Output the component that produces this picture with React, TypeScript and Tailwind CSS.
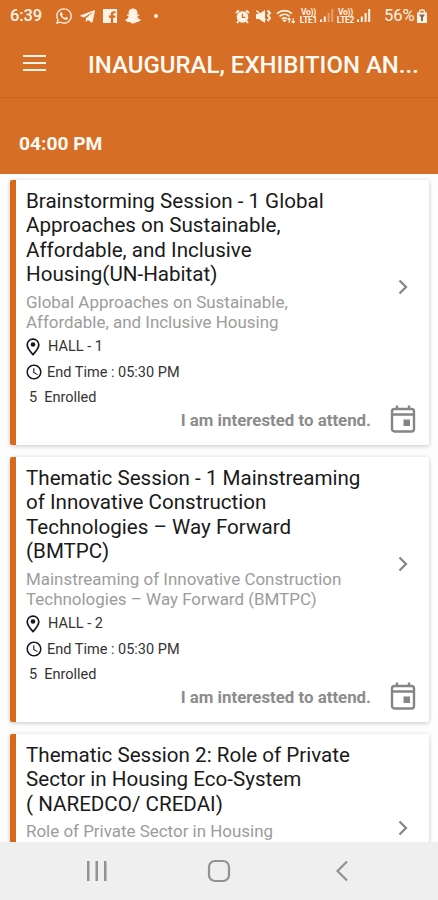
import { FaSnapchatGhost, FaTelegramPlane, FaWhatsapp } from "react-icons/fa";
import { MdAccessTime } from "react-icons/md";

type Session = {
  id: number;
  title: string[];
  summary: string[];
  details?: { hall: string; endTime: string; enrolled: number };
};

const sessions: Session[] = [
  {
    id: 1,
    title: [
      "Brainstorming Session - 1 Global",
      "Approaches on Sustainable,",
      "Affordable, and Inclusive",
      "Housing(UN-Habitat)",
    ],
    summary: [
      "Global Approaches on Sustainable,",
      "Affordable, and Inclusive Housing",
    ],
    details: { hall: "HALL - 1", endTime: "05:30 PM", enrolled: 5 },
  },
  {
    id: 2,
    title: [
      "Thematic Session - 1 Mainstreaming",
      "of Innovative Construction",
      "Technologies – Way Forward",
      "(BMTPC)",
    ],
    summary: [
      "Mainstreaming of Innovative Construction",
      "Technologies – Way Forward (BMTPC)",
    ],
    details: { hall: "HALL - 2", endTime: "05:30 PM", enrolled: 5 },
  },
  {
    id: 3,
    title: [
      "Thematic Session 2: Role of Private",
      "Sector in Housing Eco-System",
      "( NAREDCO/ CREDAI)",
    ],
    summary: ["Role of Private Sector in Housing"],
  },
];

function AlarmIcon() {
  return (
    <svg width="15" height="15" viewBox="0 0 15 15" fill="none">
      <circle cx="7.5" cy="8" r="5.8" fill="#fff3e6" />
      <path d="M1 4 4 1.4M14 4l-3-2.6M3.6 12 2 14M11.4 12l1.6 2" stroke="#fff3e6" strokeWidth="2" />
      <path d="M7.5 4.8v3.6h2.8" stroke="#d66e25" strokeWidth="1.3" />
    </svg>
  );
}

function MuteVibrateIcon() {
  return (
    <svg width="17" height="15" viewBox="0 0 17 15" fill="none">
      <path d="M1 5h3l6-4v13L4 10H1z" fill="#fff3e6" />
      <path d="m1.500 1.500 9 9.500" stroke="#fff3e6" strokeWidth="1.500" />
      <path d="m12.500 1.500 2.500 2.500-2 2.500 2 2.500-2.500 3" stroke="#fff3e6" strokeWidth="2" />
    </svg>
  );
}

function WifiIcon() {
  return (
    <svg width="20" height="15" viewBox="0 0 20 15" fill="none" stroke="#fff3e6">
      <path d="M1 4.600c4.500-4 10.500-4 15 0M3.500 7.400c3-2.700 7-2.700 10 0M6 10c1.700-1.400 3.300-1.400 5 0" strokeWidth="1.700" />
      <path d="m7 11.200 1.500 1.800 1.500-1.800z" fill="#fff3e6" />
      <path d="M13.200 9v5M11.600 10.800 13.200 9l1.500 1.800M17.200 14V9M15.600 12.200l1.600 1.800 1.600-1.800" strokeWidth="1.100" />
    </svg>
  );
}

function SignalIcon({ weak }: { weak?: boolean }) {
  return (
    <svg width="15" height="14" viewBox="0 0 15 14" fill="#fff3e6">
      <rect x="1" y="10.500" width="2" height="2.500" />
      <rect x="4.800" y="7.500" width="2" height="5.500" />
      <rect x="8.600" y="4" width="2" height="9" opacity={weak ? 0.4 : 1} />
      <rect x="12.200" y="0" width="2" height="13" opacity={weak ? 0.4 : 1} />
    </svg>
  );
}

function VolteLabel({ line }: { line: string }) {
  return (
    <div className="flex w-[19px] flex-col items-center text-[8.500px] leading-[8.500px] font-bold tracking-[-0.3px]">
      <span>Vo))</span>
      <span>{line}</span>
    </div>
  );
}

function StatusBar() {
  return (
    <div className="flex h-[32px] items-center pl-[10px] text-[#fff3e6]">
      <span className="w-[45px] text-[16.5px] font-medium tracking-[-0.1px]">6:39</span>
      <FaWhatsapp className="h-[18px] w-[18px]" />
      <FaTelegramPlane className="ml-[6px] h-[17px] w-[17px]" />
      <svg className="ml-[7px]" width="14" height="14" viewBox="0 0 14 14">
        <path fill="#fff3e6" d="M0 0h14v14h-3.800V8.800h2l.3-2.200h-2.300V5.300c0-.7.300-1.100 1.200-1.100h1.200V2.200h-1.800c-2 0-3 1.200-3 2.900v1.500H5.900v2.200h1.900V14H0z" />
      </svg>
      <FaSnapchatGhost className="ml-[8px] h-[16px] w-[16px]" />
      <span className="ml-[13px] h-1 w-1 rounded-full bg-[#fff3e6]" />
      <div className="ml-[77px] flex items-center">
        <AlarmIcon />
        <div className="ml-[5px]"><MuteVibrateIcon /></div>
        <div className="ml-[4px]"><WifiIcon /></div>
        <div className="ml-[3px]"><VolteLabel line="LTE1" /></div>
        <div className="ml-[1px]"><SignalIcon weak /></div>
        <div className="ml-[2px]"><VolteLabel line="LTE2" /></div>
        <div className="ml-[1px]"><SignalIcon /></div>
      </div>
      <span className="ml-[13px] w-[32px] text-[16.5px]">56%</span>
      <svg className="ml-[1px]" width="10" height="14" viewBox="0 0 10 14">
        <path d="M2.500 4V2.500C2.500.5 7.500.5 7.500 2.500V4" fill="none" stroke="#fff3e6" strokeWidth="1.300" />
        <path fill="#fff3e6" d="M0 3.500h10V14H0z" />
        <path fill="#8a6a55" d="M2 5.500h6L6 8.500V12H4V8.500z" />
      </svg>
    </div>
  );
}

function AppBar() {
  return (
    <div className="flex h-[65px] items-center pl-[23px]">
      <div className="flex w-[65px] flex-col gap-[5px] pb-[3px]">
        <span className="h-[2px] w-[23px] bg-[#fff3e6]" />
        <span className="h-[2px] w-[23px] bg-[#fff3e6]" />
        <span className="h-[2px] w-[23px] bg-[#fff3e6]" />
      </div>
      <h1 className="text-[24px] font-medium whitespace-nowrap text-[#fffaf4]">
        INAUGURAL, EXHIBITION AN...
      </h1>
    </div>
  );
}

function PinIcon() {
  return (
    <svg width="14" height="18" viewBox="0 0 14 18" fill="none">
      <path d="M7 1.100A5.700 5.700 0 0 0 1.200 6.800C1.200 10.500 7 16.600 7 16.600s5.800-6.100 5.800-9.800A5.700 5.700 0 0 0 7 1.100z" stroke="#171717" strokeWidth="1.700" />
      <circle cx="7" cy="6.500" r="2.300" fill="#171717" />
    </svg>
  );
}

function CalendarIcon() {
  return (
    <svg width="26" height="28" viewBox="0 0 26 28" fill="none" stroke="#858585">
      <rect x="2" y="4" width="22" height="22.500" rx="2.500" strokeWidth="2.400" />
      <path d="M2 9.500h22" strokeWidth="2.400" />
      <path d="M7 0.500V4M19 0.500V4" strokeWidth="2.400" />
      <rect x="13.500" y="14.500" width="6.500" height="6.500" fill="#858585" stroke="none" />
    </svg>
  );
}

function SessionCard({ session }: { session: Session }) {
  const { title, summary, details } = session;

  return (
    <article className="flex h-[265px] shrink-0 overflow-hidden rounded-[2px] bg-white shadow-[0_1px_4px_rgba(0,0,0,0.22)]">
      <div className="w-[6px] shrink-0 bg-[#d66a1a]" />
      <div className="grow pt-[9px] pl-[10px]">
        <div className="flex items-center justify-between">
          <div className={details ? "" : "min-h-[196px]"}>
            {/* Title */}
            <h2 className="text-[20.600px] leading-[24.400px] text-[#1a1a1a]">
              {title.map((line) => (
                <span key={line} className="block whitespace-nowrap">{line}</span>
              ))}
            </h2>
            <p className="mt-[5px] text-[16.950px] leading-[20px] text-[#9c9c9c]">
              {summary.map((line) => (
                <span key={line} className="block whitespace-nowrap">{line}</span>
              ))}
            </p>
            {/* Details */}
            {details && (
              <div className="mt-[3px] text-[14.500px] text-[#333333]">
                <div className="flex h-[25.200px] items-center gap-[8px]">
                  <PinIcon />
                  <span>{details.hall}</span>
                </div>
                <div className="flex h-[25.200px] items-center gap-[4px]">
                  <MdAccessTime className="-ml-px h-[18px] w-[18px] text-[#171717]" />
                  <span>End Time : {details.endTime}</span>
                </div>
                <div className="flex h-[25.200px] items-center gap-[7px] pl-[3px]">
                  <span>{details.enrolled}</span>
                  <span>Enrolled</span>
                </div>
              </div>
            )}
          </div>
          <svg className="mr-[20px] mb-[26px]" width="12" height="16" viewBox="0 0 12 16" fill="none">
            <path d="m2.500 1.500 6.500 6.500-6.500 6.500" stroke="#858585" strokeWidth="2.200" />
          </svg>
        </div>
        {details && (
          <div className="flex items-start justify-end pr-[13px]">
            <span className="text-[16.850px] leading-[20px] font-bold text-[#8c8c8c]">
              I am interested to attend.
            </span>
            <div className="-mt-[5px] ml-[19px]"><CalendarIcon /></div>
          </div>
        )}
      </div>
    </article>
  );
}

function NavigationBar() {
  return (
    <nav className="flex h-[58px] shrink-0 items-center bg-[#efefef] pl-[86px] text-[#929292]">
      <svg width="22" height="22" viewBox="0 0 22 22" fill="currentColor">
        <rect x="1" y="1" width="2.500" height="20" />
        <rect x="9.500" y="1" width="2.500" height="20" />
        <rect x="18" y="1" width="2.500" height="20" />
      </svg>
      <svg className="ml-[99px]" width="24" height="24" viewBox="0 0 24 24" fill="none">
        <rect x="2" y="2" width="20" height="20" rx="6" stroke="currentColor" strokeWidth="2.200" />
      </svg>
      <svg className="ml-[104px]" width="14" height="22" viewBox="0 0 14 22" fill="none">
        <path d="M12 1.500 2.500 11l9.500 9.500" stroke="currentColor" strokeWidth="2.200" />
      </svg>
    </nav>
  );
}

export default function App() {
  return (
    <div className="flex h-[900px] w-[438px] flex-col overflow-hidden bg-[#fdfdfd] font-[Roboto,sans-serif]">
      <header className="h-[174px] shrink-0 bg-[#d66e25]">
        <StatusBar />
        <AppBar />
        <div className="flex h-[77px] items-center border-t border-[#c96622] pt-[17px] pl-[19px]">
          <span className="text-[19.200px] font-bold text-[#fffaf4]">04:00 PM</span>
        </div>
      </header>
      <main className="flex min-h-0 grow flex-col gap-[12px] overflow-hidden pt-[6px] pr-[9px] pl-[10px]">
        {sessions.map((session) => (
          <SessionCard key={session.id} session={session} />
        ))}
      </main>
      <NavigationBar />
    </div>
  );
}
